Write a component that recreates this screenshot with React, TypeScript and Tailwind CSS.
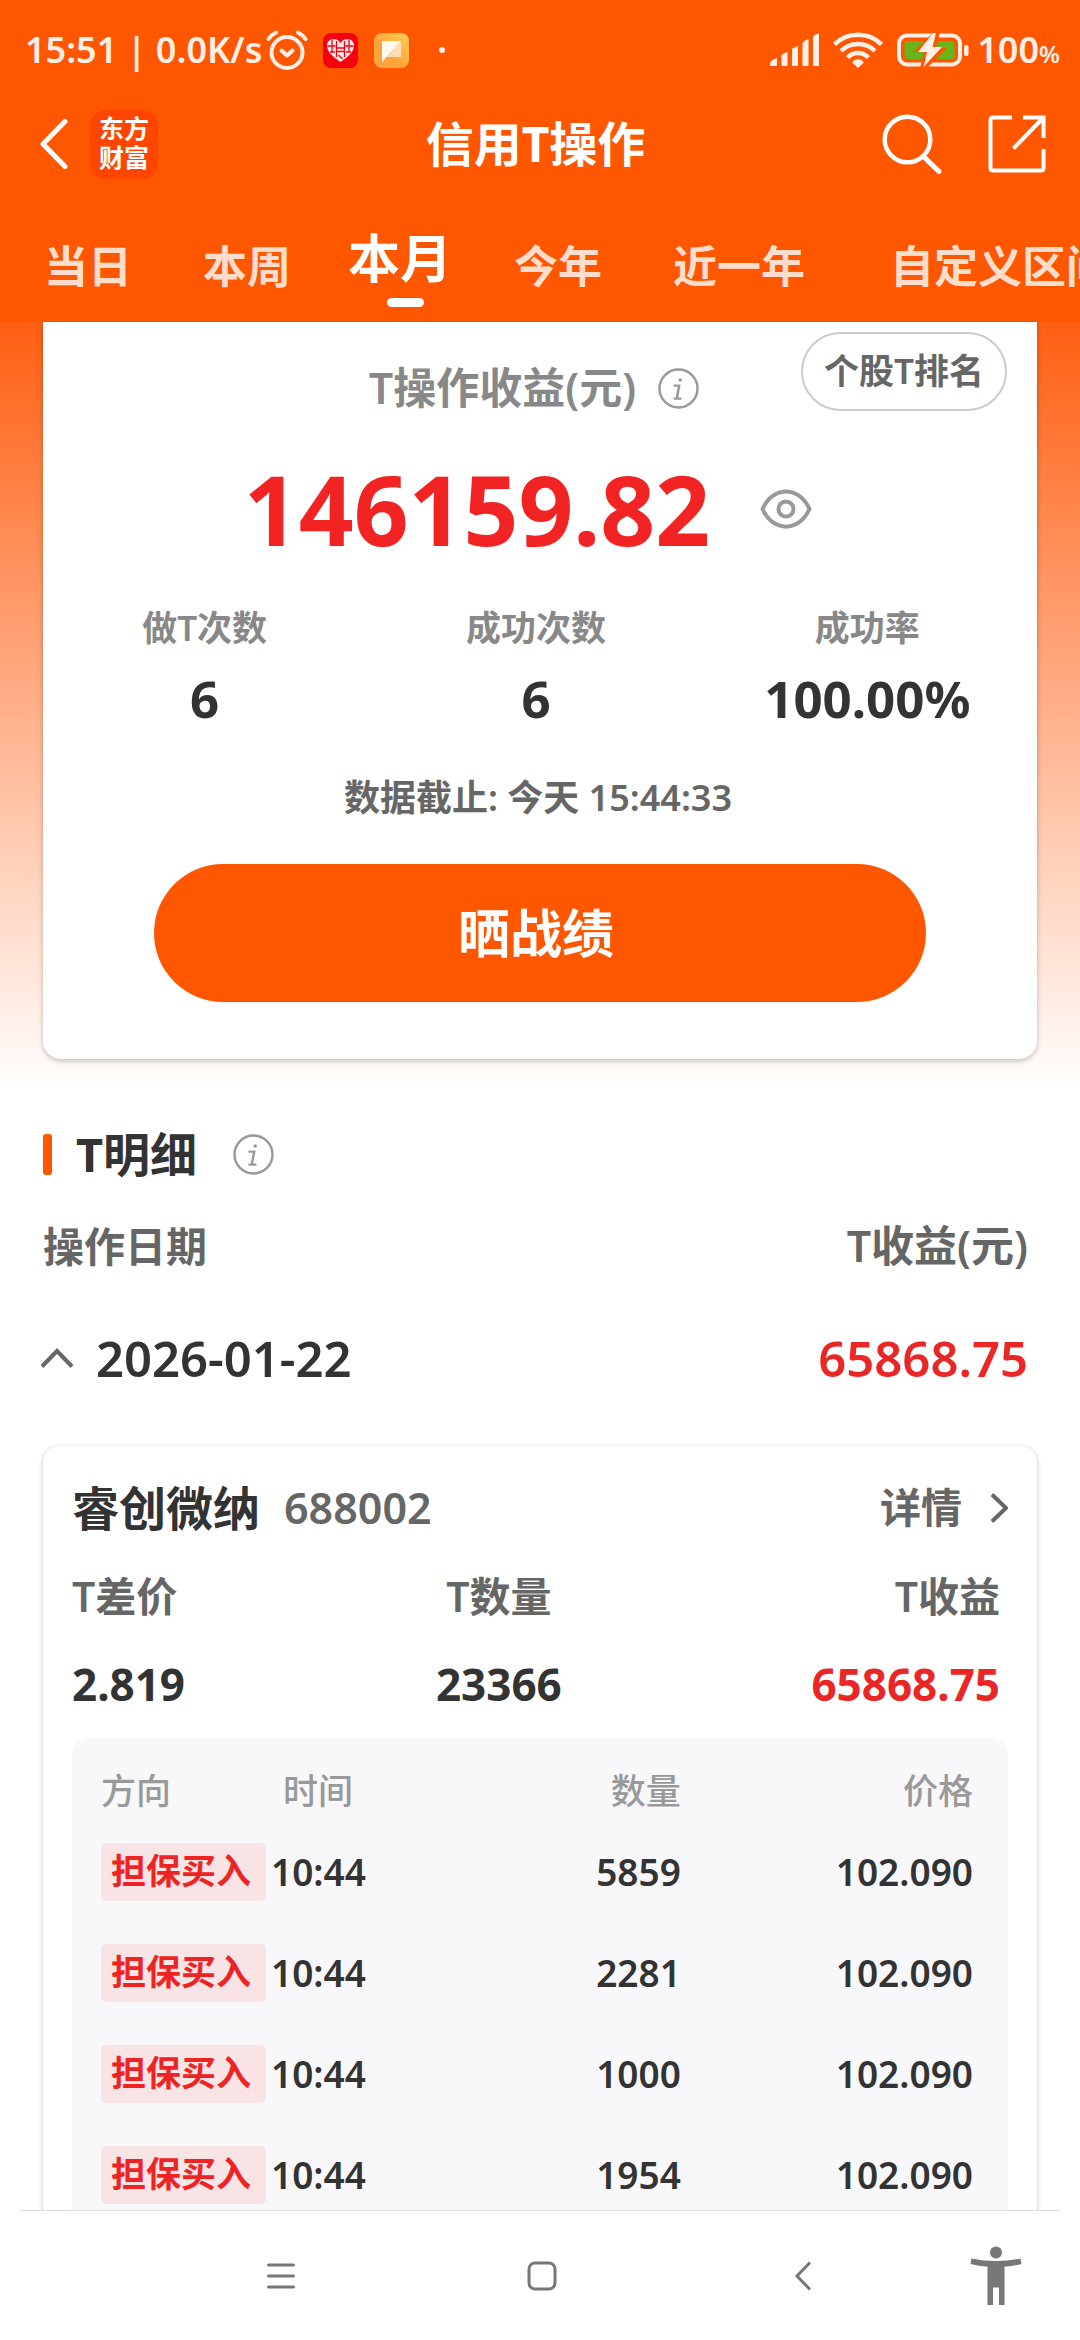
import type { ReactNode } from 'react'

const tabs = [
  { label: '当日', space: 'ml-[44px]' },
  { label: '本周', space: 'ml-[71px]' },
  { label: '本月', space: 'ml-[57px]', active: true },
  { label: '今年', space: 'ml-[62px]' },
  { label: '近一年', space: 'ml-[71px]' },
  { label: '自定义区间', space: 'ml-[85px]' },
]

const stats = [
  { label: '做T次数', value: '6' },
  { label: '成功次数', value: '6' },
  { label: '成功率', value: '100.00%' },
]

const trades = [
  { side: '担保买入', time: '10:44', amount: '5859', price: '102.090' },
  { side: '担保买入', time: '10:44', amount: '2281', price: '102.090' },
  { side: '担保买入', time: '10:44', amount: '1000', price: '102.090' },
  { side: '担保买入', time: '10:44', amount: '1954', price: '102.090' },
]

function InfoButton() {
  return (
    <button type="button" aria-label="说明" className="shrink-0">
      <svg width="41" height="41" viewBox="0 0 41 41" fill="none" stroke="#999" strokeLinecap="round">
        <circle cx="20.5" cy="20.5" r="19" strokeWidth="2.4" />
        <path d="M16.500 17.600h4.700l-2 10.600c-.2 1.400 0 2.400.6 2.400M16.500 30.600h6" strokeWidth="2.400" />
        <circle cx="22.2" cy="12" r="1.8" fill="#999" stroke="none" />
      </svg>
    </button>
  )
}

function StatusBar() {
  return (
    <div className="flex h-[100px] items-center justify-between pl-[25px] pr-5 text-[36px] font-semibold text-[#ffefe6]">
      <div className="flex items-center">
        <span className="whitespace-nowrap">15:51 | 0.0K/s</span>
        <svg className="ml-1" width="42" height="40" viewBox="0 0 42 40" fill="none" stroke="currentColor" strokeLinecap="round" strokeLinejoin="round">
          <circle cx="21" cy="22.5" r="15.5" strokeWidth="4" />
          <path d="M15.5 20.5l5.5 5 5.5-5" strokeWidth="4" />
          <path d="M2.5 9c2-3 4.500-5 7.500-6.500M39.500 9c-2-3-4.500-5-7.500-6.500" strokeWidth="4" />
        </svg>
        <svg className="ml-[15px]" width="35" height="35" viewBox="0 0 35 35">
          <rect width="35" height="35" rx="8" fill="#f5000f" />
          <path d="M17.500 29C10 24 4 19 4 12.500 4 8.500 7 6 10.500 6c3 0 5.500 1.500 7 4 1.500-2.500 4-4 7-4C28 6 31 8.500 31 12.500 31 19 25 24 17.500 29z" fill="#ffe9e9" />
          <path d="M9 6.500v13M13.500 8v16M21.500 8v16M26 6.500v13M4.500 13h8M22.500 13h8M14 15h7M14 18.500h7M7 19h5M23 19h5M15.500 22l4 4" stroke="#f5000f" strokeWidth="1.300" fill="none" />
        </svg>
        <svg className="ml-4" width="35" height="35" viewBox="0 0 35 35">
          <defs>
            <linearGradient id="note" x1="0" y1="1" x2="1" y2="0">
              <stop offset="0.400" stopColor="#ffa43d" />
              <stop offset="1" stopColor="#ffd052" />
            </linearGradient>
          </defs>
          <rect width="35" height="35" rx="8" fill="url(#note)" />
          <path d="M27 8v15a1 1 0 0 1-1 1H13z" fill="#ffe0b5" />
          <path d="M9 8h18L8 29V9a1 1 0 0 1 1-1z" fill="#fffaf0" />
        </svg>
        <span className="ml-[30px] size-[6px] rounded-full bg-[#ffefe6]" />
      </div>
      <div className="flex items-center">
        <svg width="50" height="34" viewBox="0 0 50 34" fill="currentColor">
          <path d="M0 31c0-3 4-5 7-6v7q0 1-1 1H1q-1 0-1-1zM11.500 22q2-2 6-3v13q0 1-1 1h-4q-1 0-1-1zM22 16q2-2 6-3v19q0 1-1 1h-4q-1 0-1-1zM32.500 10q2-3 6-4v26q0 1-1 1h-4q-1 0-1-1zM43 3.500q2-2.500 6-3V32q0 1-1 1h-4q-1 0-1-1z" />
        </svg>
        <svg className="ml-[13px]" width="50" height="36" viewBox="0 0 50 36" fill="none" stroke="currentColor" strokeWidth="4.500">
          <path d="M1.500 12.500C14-.5 36-.5 48.500 12.500" />
          <path d="M8 19c9-9.500 25-9.500 34 0" />
          <path d="M14.500 25.500c6-6 15-6 21 0" />
          <path d="M19.500 31c0-5 11-5 11 0L25 36z" fill="currentColor" stroke="none" />
        </svg>
        <svg className="ml-[14px]" width="72" height="34" viewBox="0 0 72 34" fill="none">
          <rect x="2" y="2.500" width="61" height="29" rx="8" stroke="currentColor" strokeWidth="4" />
          <rect x="7.500" y="8" width="50" height="18" rx="3" fill="#67b51b" />
          <path d="M37-1L16 19h11l-4 16h7l20-20H39l4-16z" fill="#ff5600" />
          <path d="M36 0L21 19h9l-3.500 15L45 14h-9.500L39 0z" fill="currentColor" />
          <rect x="67" y="12" width="4.500" height="11" rx="2" fill="currentColor" />
        </svg>
        <span className="ml-2">
          100<small className="text-[24px]">%</small>
        </span>
      </div>
    </div>
  )
}

function NavBar() {
  return (
    <div className="grid h-[88px] grid-cols-[1fr_auto_1fr] items-center pl-[39px] pr-[34px]">
      <div className="flex items-center">
        <button type="button" aria-label="返回">
          <svg width="30" height="52" viewBox="0 0 30 52" fill="none" stroke="#fff" strokeWidth="5" strokeLinecap="round" strokeLinejoin="round">
            <path d="M26 3.500L4 26l22 22.500" />
          </svg>
        </button>
        <span className="ml-[21px] h-[69px] w-[68px] rounded-2xl bg-[#ff4600] px-[9px] pt-[4px] text-[25px]/[29px] font-bold">
          东方财富
        </span>
      </div>
      <h1 className="pr-[14px] text-[48px] font-bold">信用T操作</h1>
      <div className="flex items-center justify-end gap-[46px]">
        <button type="button" aria-label="搜索">
          <svg width="60" height="60" viewBox="0 0 60 60" fill="none" stroke="#fff" strokeWidth="4.500" strokeLinecap="round">
            <circle cx="25.500" cy="25.500" r="22.800" />
            <path d="M41.500 42.500L57 57.500" strokeWidth="5" />
          </svg>
        </button>
        <button type="button" aria-label="分享">
          <svg width="58" height="58" viewBox="0 0 58 58" fill="none" stroke="#fff" strokeWidth="4">
            <path d="M24 2.500H5Q2.500 2.500 2.500 5v48q0 2.500 2.500 2.500h48q2.500 0 2.500-2.500V34" />
            <path d="M35 2.500h20.500V23M55 3L25.500 33.500" />
          </svg>
        </button>
      </div>
    </div>
  )
}

function Tabs() {
  return (
    <nav className="flex h-[134px] items-start overflow-hidden pt-10">
      {tabs.map((tab) =>
        tab.active ? (
          <button key={tab.label} type="button" className={`${tab.space} flex shrink-0 flex-col items-end`}>
            <span className="text-[52px]/[60px] font-bold">{tab.label}</span>
            <span className="mr-7 mt-[10px] h-[9px] w-[37px] rounded-full bg-white" />
          </button>
        ) : (
          <button
            key={tab.label}
            type="button"
            className={`${tab.space} shrink-0 whitespace-nowrap pt-2 text-[44px]/[60px] font-semibold text-[#ffddcc]`}
          >
            {tab.label}
          </button>
        ),
      )}
    </nav>
  )
}

function Summary() {
  return (
    <section className="mx-[43px] rounded-b-[18px] bg-white pb-[57px] pt-[10px] shadow-[0_2px_5px_rgba(0,0,0,0.25)]">
      <div className="grid grid-cols-[1fr_auto_1fr] items-start">
        <span />
        <div className="mt-[26px] flex items-center gap-[22px] pr-3">
          <h2 className="text-[43px]/[60px] font-semibold text-[#888]">T操作收益(元)</h2>
          <InfoButton />
        </div>
        <button
          type="button"
          className="mr-[30px] h-[79px] justify-self-end rounded-full border-2 border-[#ccc] px-[21px] text-[35px] font-semibold text-[#666]"
        >
          个股T排名
        </button>
      </div>
      <div className="mt-[41px] flex items-center justify-center gap-[50px] pr-6">
        <strong className="text-[96px]/[100px] font-bold text-[#f22323]">146159.82</strong>
        <button type="button" aria-label="隐藏金额">
          <svg width="52" height="40" viewBox="0 0 52 40" fill="none" stroke="#999" strokeWidth="4">
            <path d="M2.500 20C13-3.500 39-3.500 49.500 20 39 43.500 13 43.500 2.500 20z" strokeLinejoin="round" />
            <circle cx="26" cy="20" r="7.500" />
          </svg>
        </button>
      </div>
      <dl className="-ml-1 mr-1 mt-[45px] grid grid-cols-3 text-center">
        {stats.map((s) => (
          <div key={s.label}>
            <dt className="text-[35px]/[48px] font-semibold text-[#888]">{s.label}</dt>
            <dd className="mt-4 text-[51px]/[60px] font-bold text-[#333]">{s.value}</dd>
          </div>
        ))}
      </dl>
      <p className="mt-[46px] pr-1 text-center text-[36px]/[48px] font-semibold text-[#666]">数据截止: 今天 15:44:33</p>
      <div className="mt-[42px] px-[111px]">
        <button type="button" className="h-[138px] w-full rounded-full bg-[#ff5600] pr-2 text-[52px] font-bold text-white">
          晒战绩
        </button>
      </div>
    </section>
  )
}

function Cell({ label, children, className }: { label: string; children: ReactNode; className: string }) {
  return (
    <div className={className}>
      <dt className="text-[41px]/[60px] font-semibold text-[#666]">{label}</dt>
      <dd className="mt-7 text-[44px]/[60px] font-bold">{children}</dd>
    </div>
  )
}

function StockCard() {
  return (
    <section className="mx-[43px] mt-[58px] rounded-t-2xl bg-white px-[29px] pt-8 shadow-[0_1px_4px_rgba(0,0,0,0.25)]">
      <div className="flex h-[60px] items-center">
        <h3 className="text-[47px] font-bold">睿创微纳</h3>
        <span className="ml-6 text-[43px] font-semibold text-[#666]">688002</span>
        <a href="#" className="ml-auto flex items-center gap-[28px] text-[41px] font-semibold text-[#666]">
          详情
          <svg width="18" height="30" viewBox="0 0 18 30" fill="none" stroke="#666" strokeWidth="4">
            <path d="M2 1.500L16 15 2 28.500" />
          </svg>
        </a>
      </div>
      <dl className="mt-7 grid grid-cols-[28%_36%_36%] pr-2">
        <Cell label="T差价" className="text-left">2.819</Cell>
        <Cell label="T数量" className="text-center">23366</Cell>
        <Cell label="T收益" className="text-right">
          <span className="text-[#ea2626]">65868.75</span>
        </Cell>
      </dl>
      <div className="mt-6 rounded-t-2xl bg-[#f8f8fb] pl-[29px] pr-[35px] pt-[29px]">
        <table className="w-full table-fixed text-[37px] font-semibold">
          <thead>
            <tr className="h-[54px] align-top text-[35px]/[48px] text-[#999]">
              <th className="w-[19.5%] text-left font-medium">方向</th>
              <th className="w-[22%] pl-3 text-left font-medium">时间</th>
              <th className="w-[25%] text-right font-medium">数量</th>
              <th className="text-right font-medium">价格</th>
            </tr>
          </thead>
          <tbody>
            {trades.map((t) => (
              <tr key={t.amount} className="h-[101px]">
                <td>
                  <span className="flex h-[58px] w-[165px] items-center rounded-[5px] bg-[#f8e4e4] pl-[10px] text-[35px] text-[#ee2424]">{t.side}</span>
                </td>
                <td>{t.time}</td>
                <td className="text-right">{t.amount}</td>
                <td className="text-right">{t.price}</td>
              </tr>
            ))}
          </tbody>
        </table>
      </div>
    </section>
  )
}

function SystemNav() {
  return (
    <footer className="shrink-0 bg-white px-5">
      <div className="flex h-[130px] items-center border-t border-[#dedfe2]">
        <div className="grid flex-1 grid-cols-3 justify-items-center pl-[130px] pr-[37px]">
          <button type="button" aria-label="最近任务">
            <svg width="30" height="30" viewBox="0 0 30 30" stroke="#777" strokeWidth="3" strokeLinecap="round">
              <path d="M2.500 4h25M2.500 15h25M2.500 26h25" />
            </svg>
          </button>
          <button type="button" aria-label="主屏幕">
            <svg width="30" height="30" viewBox="0 0 30 30" fill="none" stroke="#777" strokeWidth="3">
              <rect x="2" y="2" width="26" height="26" rx="6" />
            </svg>
          </button>
          <button type="button" aria-label="返回上一级">
            <svg width="18" height="30" viewBox="0 0 18 30" fill="none" stroke="#777" strokeWidth="3">
              <path d="M16 1.500L3 15l13 13.500" />
            </svg>
          </button>
        </div>
        <button type="button" aria-label="无障碍" className="mr-[38px]">
          <svg width="52" height="60" viewBox="0 0 52 60" fill="#777">
            <circle cx="26" cy="6.500" r="6" />
            <path d="M1.500 12.500q24.500 5 49 0l1 5.500q-8 2-17 2.800V59H29V41.500h-6V59h-5.500V20.800Q8.500 20 .5 18z" />
          </svg>
        </button>
      </div>
    </footer>
  )
}

export default function App() {
  return (
    <div className="flex h-screen flex-col overflow-hidden bg-white font-['Noto_Sans','Noto_Sans_CJK_SC',sans-serif] text-[#333]">
      <header className="shrink-0 bg-[#ff5600] text-white">
        <StatusBar />
        <NavBar />
        <Tabs />
      </header>
      <main className="min-h-0 flex-1 overflow-hidden bg-[linear-gradient(to_bottom,#ff5f12,#fff_768px)]">
        <Summary />
        <div className="mt-[65px] flex h-[60px] items-center px-[43px]">
          <span className="h-[41px] w-[9px] rounded-[3px] bg-[#ff5600]" />
          <h2 className="ml-6 text-[47px] font-bold">T明细</h2>
          <span className="ml-9 flex">
            <InfoButton />
          </span>
        </div>
        <div className="mt-8 flex justify-between pl-[43px] pr-[52px] text-[41px]/[60px] font-semibold text-[#666]">
          <span>操作日期</span>
          <span className="text-[43px]">T收益(元)</span>
        </div>
        <button type="button" aria-expanded="true" className="mt-[52px] flex w-full items-center pl-[40px] pr-[52px] text-[49px]/[60px] font-semibold">
          <svg width="34" height="22" viewBox="0 0 34 22" fill="none" stroke="#666" strokeWidth="4">
            <path d="M2 19.500L17 4l15 15.500" />
          </svg>
          <span className="ml-[22px]">2026-01-22</span>
          <span className="ml-auto text-[#ea2626]">65868.75</span>
        </button>
        <StockCard />
      </main>
      <SystemNav />
    </div>
  )
}
